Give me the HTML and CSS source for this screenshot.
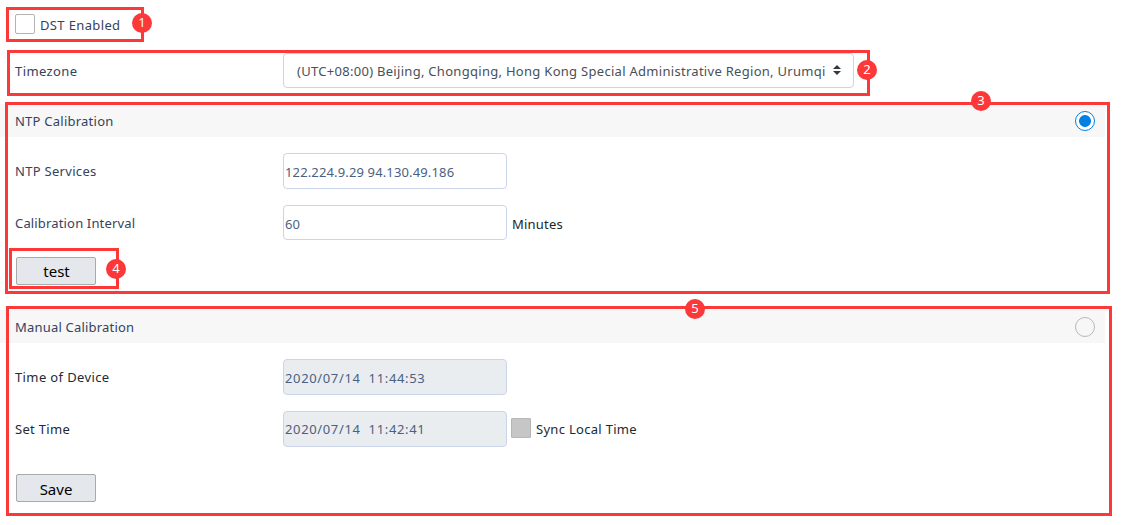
FILE: index.html
```
<!DOCTYPE html>
<html lang="en">
<head>
<meta charset="utf-8">
<title>Time Settings</title>
<link rel="stylesheet" href="styles.css">
</head>
<body>
<main class="page">
  <div class="row row-dst">
    <span class="checkbox"></span><span class="text t-dst">DST Enabled</span>
  </div>
  <div class="row row-timezone">
    <span class="label t-timezone">Timezone</span>
    <div class="select">
      <span class="text t-zone">(UTC+08:00) Beijing, Chongqing, Hong Kong Special Administrative Region, Urumqi</span>
      <svg class="arrows" width="8" height="10" viewBox="0 0 8 10"><path d="M4 0L8 4H0ZM4 10L0 6H8Z" fill="#343a40"/></svg>
    </div>
  </div>
  <section class="section">
    <header class="band"><span class="t-ntp">NTP Calibration</span><span class="radio radio-on"></span></header>
    <div class="row field-row">
      <span class="label t-services">NTP Services</span>
      <div class="input"><span class="t-ip">122.224.9.29 94.130.49.186</span></div>
    </div>
    <div class="row field-row">
      <span class="label t-interval">Calibration Interval</span>
      <div class="input input-short"><span class="t-ip">60</span></div>
      <span class="unit t-minutes">Minutes</span>
    </div>
    <button class="button button-test">test</button>
  </section>
  <section class="section section-manual">
    <header class="band"><span class="t-manual">Manual Calibration</span><span class="radio"></span></header>
    <div class="row field-row dark">
      <span class="label t-device">Time of Device</span>
      <div class="input disabled"><span class="t-date">2020/07/14&nbsp; 11:44:53</span></div>
    </div>
    <div class="row field-row dark">
      <span class="label t-set">Set Time</span>
      <div class="input disabled set-time"><span class="t-date">2020/07/14&nbsp; 11:42:41</span></div>
      <span class="checkbox checkbox-disabled"></span>
      <span class="text t-sync">Sync Local Time</span>
    </div>
    <button class="button button-save">Save</button>
  </section>
  <div class="mark mark-1"><b class="badge">1</b></div>
  <div class="mark mark-2"><b class="badge">2</b></div>
  <div class="mark mark-3"><b class="badge">3</b></div>
  <div class="mark mark-4"><b class="badge">4</b></div>
  <div class="mark mark-5"><b class="badge">5</b></div>
</main>
</body>
</html>
```
FILE: styles.css
```
* { box-sizing: border-box; }
body { margin: 0; background: #fff; }
.page {
  position: relative;
  width: 1132px;
  height: 525px;
  overflow: hidden;
  padding-top: 14px;
  font: 13px/20px "Noto Sans", "Open Sans", sans-serif;
  letter-spacing: 0.3px;
  color: #34435e;
  white-space: nowrap;
}
.row { display: flex; padding-left: 15px; }
.row-dst { height: 39px; }
.checkbox {
  flex: none;
  width: 20px;
  height: 20px;
  border: 1px solid #b3b3b3;
  border-radius: 2px;
  background: #fff;
}
.row-dst .text { margin: 1px 0 0 5px; }
.t-dst { letter-spacing: 0.36px; }
.row-timezone { height: 51px; }
.label { flex: none; width: 268px; padding-top: 8px; }
.t-timezone { letter-spacing: 0.4px; }
.t-interval { letter-spacing: 0.16px; }
.t-device { letter-spacing: 0.38px; }
.t-manual { letter-spacing: 0.2px; }
.t-ntp { letter-spacing: 0.24px; }
.select {
  display: flex;
  align-items: center;
  justify-content: space-between;
  width: 571px;
  height: 35px;
  padding: 0 12px 0 13px;
  border: 1px solid #ced4da;
  border-radius: 4px;
  color: #495057;
}
.select .text { padding-top: 1px; letter-spacing: 0.29px; }
.arrows { margin-top: -1px; }
.section { height: 206px; }
.band {
  display: flex;
  align-items: center;
  justify-content: space-between;
  width: 1105px;
  height: 33px;
  margin-bottom: 16px;
  padding: 0 10px 0 15px;
  background: #f7f7f7;
}
.radio { width: 20px; height: 20px; border: 1px solid #b8b8b8; border-radius: 50%; }
.radio-on { border-color: #0080e3; background: radial-gradient(circle, #0080e3 5.5px, #fff 6.3px); }
.field-row { height: 52px; }
.input {
  flex: none;
  width: 224px;
  height: 36px;
  padding: 8px 0 0 1px;
  border: 1px solid #cbd5e9;
  border-radius: 4px;
  color: #4c5f80;
}
.input-short { height: 35px; }
.t-ip { letter-spacing: 0.14px; }
.t-date { letter-spacing: 0.64px; }
.disabled { background: #e9edf0; }
.set-time { padding-top: 7px; }
.dark { color: #212a36; }
.unit { padding: 9px 0 0 5px; color: #212529; letter-spacing: 0.2px; }
.checkbox-disabled { margin: 7px 5px 0 4px; background: #c6c6c6; border-color: #b5b5b5; border-radius: 1px; }
.t-sync { padding-top: 8px; }
.button {
  display: block;
  width: 80px;
  height: 28px;
  margin-left: 16px;
  padding: 2px 0 0;
  border: 1px solid #aaa;
  border-radius: 2px;
  background: #e4e7ec;
  color: #000;
  font: 15px/22px "Noto Sans", sans-serif;
}
.button-test { padding: 0 0 0 1px; }
.button-save { margin-top: 11px; }
.mark { position: absolute; border: 3px solid #fc3838; }
.mark-1 { left: 6px; top: 7px; width: 138px; height: 35px; }
.mark-2 { left: 7px; top: 50px; width: 863px; height: 46px; }
.mark-3 { left: 5px; top: 102px; width: 1105px; height: 192px; }
.mark-4 { left: 9px; top: 248px; width: 110px; height: 41px; }
.mark-5 { left: 6px; top: 306px; width: 1106px; height: 210px; }
.badge {
  position: absolute;
  width: 20px;
  height: 20px;
  border-radius: 50%;
  background: #fc3838;
  color: #fff;
  font: 13px/19px "Noto Sans", sans-serif;
  letter-spacing: 0;
  text-align: center;
}
.mark-1 .badge { left: 123px; top: 3px; }
.mark-2 .badge { left: 847px; top: 7px; }
.mark-3 .badge { left: 963px; top: -14px; }
.mark-4 .badge { left: 94px; top: 8px; }
.mark-5 .badge { left: 676px; top: -10px; }
```
